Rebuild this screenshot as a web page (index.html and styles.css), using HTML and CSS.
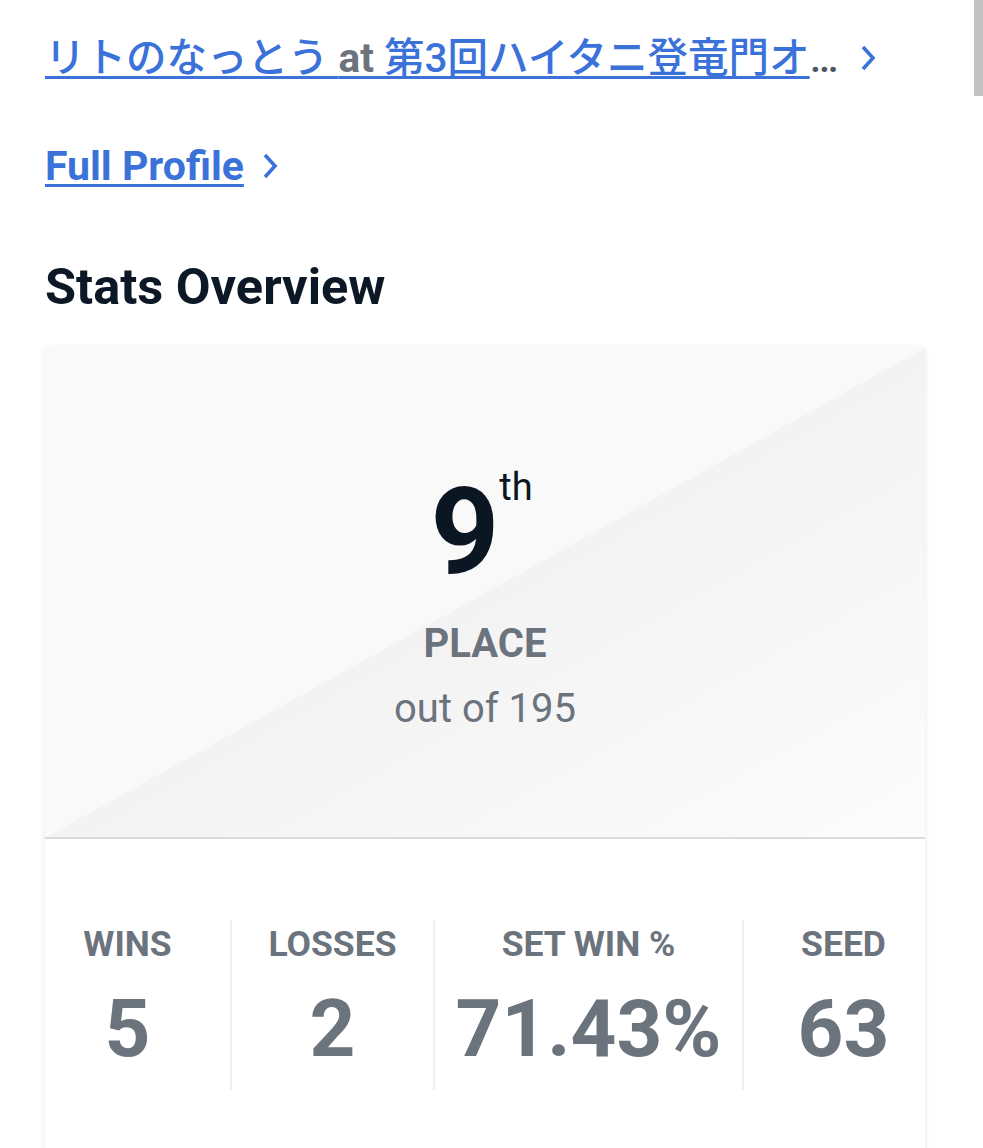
FILE: index.html
```html
<!DOCTYPE html>
<html lang="ja">
<head>
<meta charset="utf-8">
<title>Stats Overview</title>
<link rel="stylesheet" href="styles.css">
</head>
<body>
<div class="page">
  <div class="title-row">
    <span class="title-trunc"><a class="link" href="#">リトのなっとう <span class="at">at</span> 第3回ハイタニ登竜門オープン</a></span>
    <svg class="chev chev-title" viewBox="0 0 18 28" aria-hidden="true"><polyline points="4,3 14,14 4,25"/></svg>
  </div>

  <div class="profile-row">
    <a class="link profile-link" href="#">Full Profile</a>
    <svg class="chev chev-profile" viewBox="0 0 18 28" aria-hidden="true"><polyline points="4,3 14,14 4,25"/></svg>
  </div>

  <h2 class="heading">Stats Overview</h2>

  <div class="card">
    <div class="placement">
      <div class="rank"><span class="rank-num">9</span><span class="rank-suffix">th</span></div>
      <div class="place-label">PLACE</div>
      <div class="place-total">out of 195</div>
    </div>
    <div class="stats">
      <div class="stat stat-wins">
        <div class="stat-label">WINS</div>
        <div class="stat-value">5</div>
      </div>
      <div class="stat stat-losses">
        <div class="stat-label">LOSSES</div>
        <div class="stat-value">2</div>
      </div>
      <div class="stat stat-pct">
        <div class="stat-label">SET WIN %</div>
        <div class="stat-value">71.43%</div>
      </div>
      <div class="stat stat-seed">
        <div class="stat-label">SEED</div>
        <div class="stat-value">63</div>
      </div>
    </div>
  </div>
</div>
<div class="scroll-thumb"></div>
</body>
</html>
```

FILE: styles.css
```css
* { box-sizing: border-box; }

html, body {
  margin: 0;
  padding: 0;
  background: #ffffff;
}

body {
  font-family: Roboto, "Noto Sans CJK JP", sans-serif;
  color: #0d1826;
  overflow: hidden;
}

.page {
  padding: 34px 58px 80px 45px;
}

.link {
  color: #3b72da;
  text-decoration: underline;
  text-decoration-thickness: 3px;
  text-underline-offset: 4px;
}

.title-row {
  display: flex;
  align-items: center;
  height: 48px;
}

.title-trunc {
  display: block;
  flex: none;
  width: 795px;
  overflow: hidden;
  white-space: nowrap;
  text-overflow: ellipsis;
  font-size: 40.5px;
  line-height: 48px;
  font-weight: 500;
  color: #4f5661;
  font-family: Roboto, "Noto Sans CJK JP", sans-serif;
}

.at {
  color: #6b737d;
  font-weight: 700;
}

.chev {
  flex: none;
  fill: none;
  stroke: #3b72da;
  stroke-width: 3.6;
  stroke-linecap: butt;
  stroke-linejoin: miter;
}

.chev-title {
  width: 18px;
  height: 28px;
  margin-left: 19px;
}

.profile-row {
  display: flex;
  align-items: center;
  margin-top: 60px;
  height: 48px;
}

.profile-link {
  font-size: 41px;
  line-height: 48px;
  font-weight: 700;
}

.chev-profile {
  width: 18px;
  height: 28px;
  margin-left: 17px;
}

.heading {
  margin: 69px 0 0;
  font-size: 50.5px;
  line-height: 56px;
  font-weight: 700;
  color: #0d1826;
}

.card {
  margin-top: 32px;
  width: 880px;
  border-radius: 4px;
  background: #ffffff;
  box-shadow: 0 1px 6px rgba(0, 0, 0, 0.09);
  overflow: hidden;
}

.placement {
  height: 492px;
  padding-top: 125px;
  text-align: center;
  background: linear-gradient(to bottom right, #f9f9f9 0%, #f9f9f9 50%, #f3f3f3 50.2%, #f8f8f8 78%, #fcfcfc 100%);
  border-bottom: 2px solid #d9dcdf;
}

.rank {
  height: 120px;
  line-height: 120px;
  padding-right: 7px;
  color: #0b1623;
}

.rank-num {
  font-size: 120px;
  font-weight: 700;
  vertical-align: baseline;
}

.rank-suffix {
  font-size: 38px;
  line-height: 30px;
  font-weight: 400;
  vertical-align: top;
  margin-left: 0;
}

.place-label {
  margin-top: 30px;
  font-size: 40px;
  line-height: 44px;
  font-weight: 700;
  color: #6b737d;
}

.place-total {
  margin-top: 20px;
  font-size: 40px;
  line-height: 46px;
  font-weight: 400;
  color: #6b737d;
}

.stats {
  display: grid;
  grid-template-columns: 185px 203px 309px 183px;
  padding: 81px 0 140px;
}

.stat {
  padding: 4px 0 16px;
  text-align: center;
  color: #6b737d;
}

.stat + .stat {
  border-left: 2px solid #efefef;
}

.stat-wins { padding-right: 20px; }
.stat-seed { padding-left: 18px; }

.stat-label {
  font-size: 35.5px;
  line-height: 40px;
  font-weight: 700;
}

.stat-value {
  margin-top: 20px;
  font-size: 80px;
  line-height: 90px;
  font-weight: 700;
}

.scroll-thumb {
  position: fixed;
  top: 0;
  right: 0;
  width: 9px;
  height: 96px;
  background: #c2c2c2;
}
```
